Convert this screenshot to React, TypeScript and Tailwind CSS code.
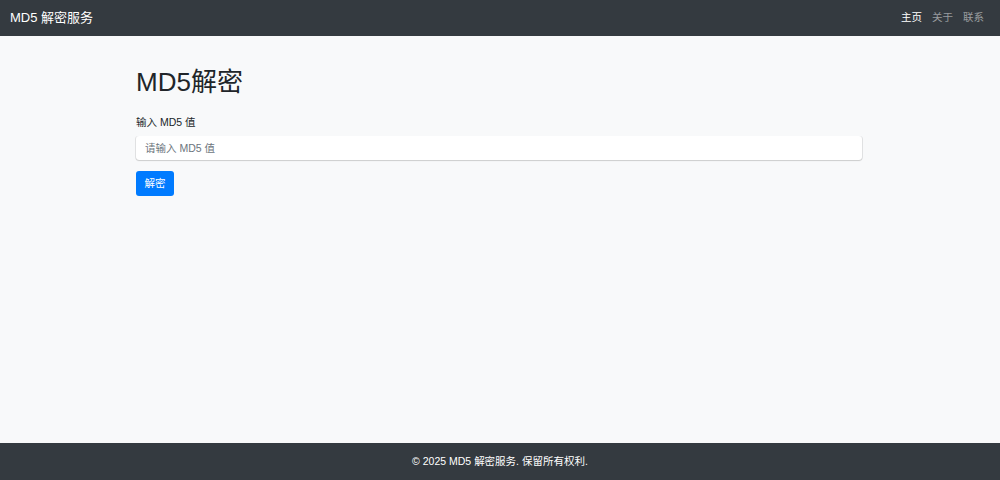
export default function App() {
  return (
    <div
      className="flex min-h-screen flex-col bg-[#f8f9fa] text-[#212529]"
      style={{ fontFamily: '"Liberation Sans", Arial, "Noto Sans CJK SC", sans-serif' }}
    >
      <nav className="flex h-[36px] items-center justify-between bg-[#343a40] pl-[10px] pr-[16px]">
        <span className="text-[13px] text-white">MD5 解密服务</span>
        <ul className="flex gap-[10px] text-[10.5px]">
          <li className="text-white">主页</li>
          <li className="text-white/50">关于</li>
          <li className="text-white/50">联系</li>
        </ul>
      </nav>

      <main className="flex-1">
        <div className="mx-auto w-[728px] pr-[2px] pt-[31px]">
          <h1 className="mb-[17px] text-[26px] leading-[1.2] font-normal">MD5解密</h1>
          <form onSubmit={(e) => e.preventDefault()}>
            <label className="mb-[5px] block text-[10.5px] leading-[1.5]">输入 MD5 值</label>
            <input
              type="text"
              placeholder="请输入 MD5 值"
              className="block h-[24px] w-full rounded-[3px] bg-white px-[9px] text-[10.5px] shadow-[0_1px_1px_rgba(0,0,0,0.18),-1px_0_0_rgba(0,0,0,0.08),1px_0_0_rgba(0,0,0,0.08)] outline-none placeholder:text-[#6c757d]"
            />
            <button
              type="submit"
              className="mt-[11px] h-[25px] w-[38px] rounded-[3px] bg-[#007bff] text-[10.5px] text-white"
            >
              解密
            </button>
          </form>
        </div>
      </main>

      <footer className="flex h-[37px] items-center justify-center bg-[#343a40] text-[10.5px] text-white">
        © 2025 MD5 解密服务. 保留所有权利.
      </footer>
    </div>
  );
}
